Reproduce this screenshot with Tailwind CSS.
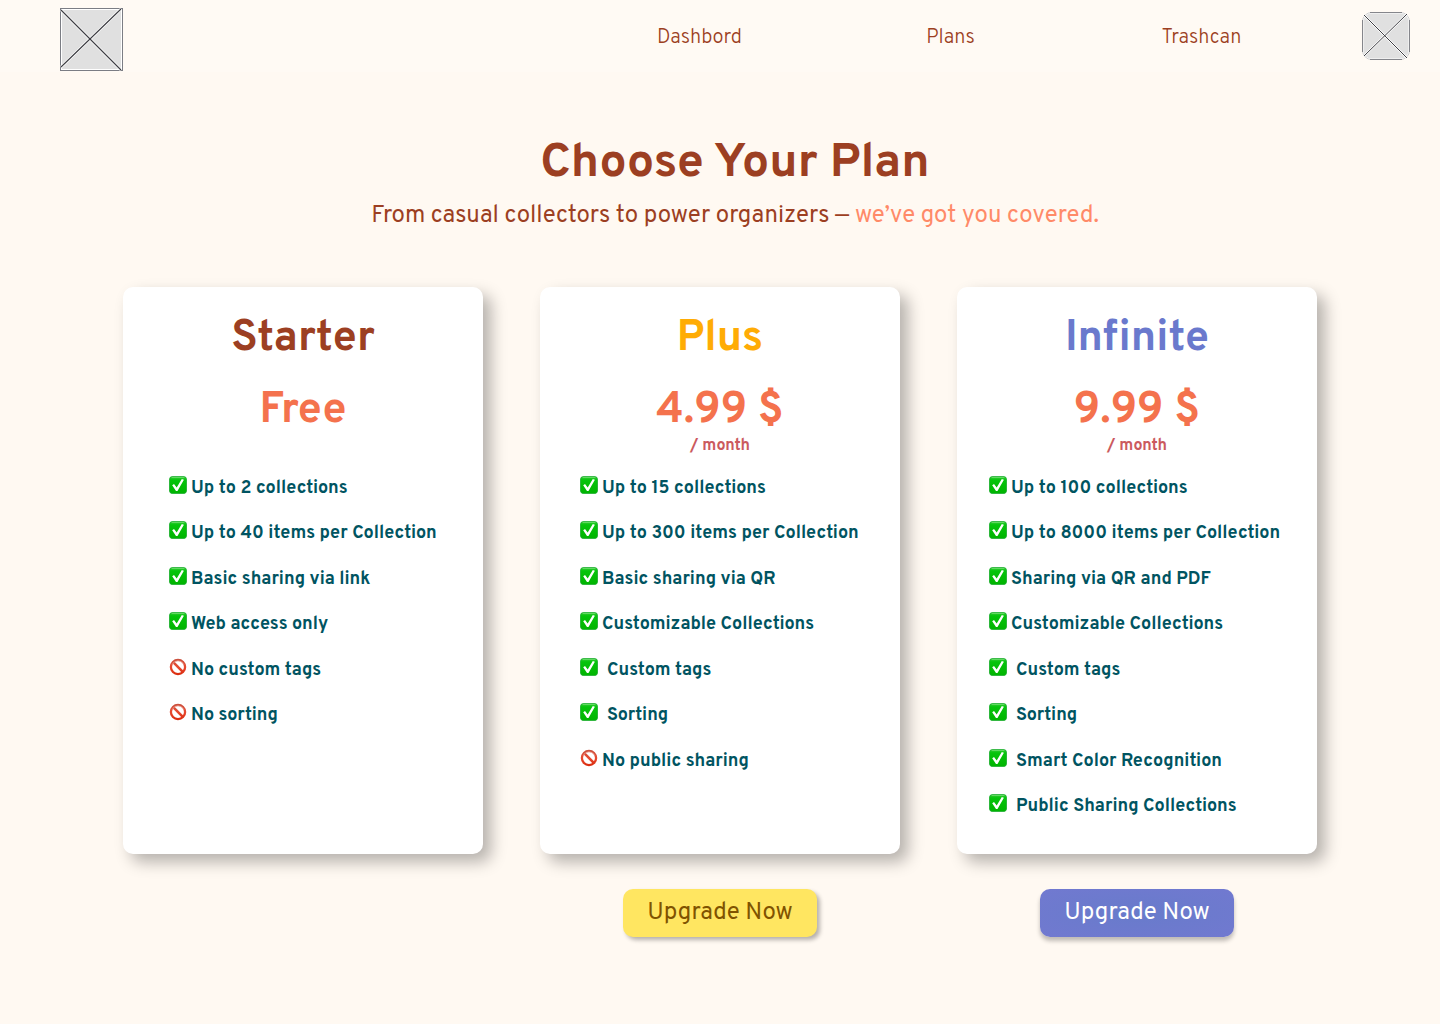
<!DOCTYPE html>
<html lang="en">
<head>
<meta charset="utf-8">
<meta name="viewport" content="width=device-width, initial-scale=1">
<title>Choose Your Plan</title>
<script src="https://cdn.jsdelivr.net/npm/@tailwindcss/browser@4"></script>
</head>
<body class="min-h-screen bg-[#fff9f2] font-[Overpass,Roboto,sans-serif] text-[#9c3f22]">
<svg class="absolute size-0" aria-hidden="true">
  <defs>
    <linearGradient id="green" x1="0" y1="0" x2="0" y2="1"><stop offset="0" stop-color="#3fd03f"/><stop offset=".2" stop-color="#06c40c"/><stop offset="1" stop-color="#00b400"/></linearGradient>
    <linearGradient id="red" gradientUnits="userSpaceOnUse" x1="0" y1="1" x2="0" y2="17"><stop offset="0" stop-color="#c9513f"/><stop offset=".5" stop-color="#e8492f"/><stop offset="1" stop-color="#d92a0c"/></linearGradient>
    <symbol id="check" viewBox="0 0 18 18"><rect x=".4" y=".4" width="17.2" height="17.2" rx="3.4" fill="url(#green)" stroke="#15a92a" stroke-width=".8"/><path d="M3 1.500h12" stroke="#6fdc6f" stroke-width=".8" stroke-linecap="round"/><path d="M3.2 9.200 5 7.900 7.700 11.600 12.800 3 14.900 3.700 8.500 15H7z" fill="#fff"/></symbol>
    <symbol id="no" viewBox="0 0 18 18"><g fill="none" stroke="url(#red)"><circle cx="9" cy="9" r="7.1" stroke-width="2.3"/><path d="m4.2 4.2 9.6 9.6" stroke-width="2.600"/></g><path d="M3.2 6.4a6.5 6.5 0 0 1 11.6 0" fill="none" stroke="#f3b2a6" stroke-width=".7"/></symbol>
  </defs>
</svg>
<header class="flex h-[72px] items-start bg-[#fffaf4] pt-2 pr-[30px] pl-[60px]">
  <a href="#" aria-label="Home" class="shrink-0">
    <svg class="size-[63px]" viewBox="0 0 63 63"><rect x=".5" y=".5" width="62" height="62" fill="#fff" stroke="#7b7d84"/><rect x="2" y="2" width="59" height="59" fill="#e0e0e0"/><path d="M1 2 61 62M1 59 61 1" stroke="#fff" stroke-width="2.5"/><path d="M1 2 61 62M1 59 61 1" stroke="#3d3d42" stroke-width="1.1"/></svg>
  </a>
  <nav class="ml-auto flex text-center text-xl leading-[60px] font-light">
    <a href="#" class="w-[251px]">Dashbord</a>
    <a href="#" class="w-[251px]">Plans</a>
    <a href="#" class="w-[251px]">Trashcan</a>
  </nav>
  <button type="button" aria-label="Account" class="mt-1 ml-[35px] shrink-0">
    <svg class="block size-12" viewBox="0 0 48 48"><rect x=".5" y=".5" width="47" height="47" rx="9" fill="#fff" stroke="#d0d0d2"/><path d="M8 .5h32M8 47.500h32M.5 8v32M47.500 8v32" stroke="#85868b"/><rect x="1.500" y="1.500" width="45" height="45" rx="8" fill="#e0e0e0"/><path d="M2 3 45 46M2 44 45 2" stroke="#fff" stroke-width="2.2"/><path d="M2 3 45 46M2 44 45 2" stroke="#3d3d42"/></svg>
  </button>
</header>
<main>
  <div class="pt-16 pl-[30px] text-center">
    <h1 class="text-5xl leading-[56px] font-bold">Choose Your Plan</h1>
    <p class="mt-[6px] text-2xl leading-9">From casual collectors to power organizers — <span class="text-[#ff8a68]">we’ve got you covered.</span></p>
  </div>
  <div class="mt-[53px] flex justify-center gap-[57px]">
    <section class="w-[360px]">
      <div class="h-[567px] rounded-[10px] bg-white pt-[22px] text-center shadow-[8px_8px_16px_#0000004a]">
        <h2 class="text-[43px] leading-[60px] font-bold">Starter</h2>
        <p class="mt-3 text-[43px] leading-[60px] font-bold text-[#f4724d]">Free</p>
        <ul class="mt-[25px] grid h-[364px] grid-rows-8 pl-[46px] text-left text-lg font-bold text-[#005461]">
          <li class="flex items-center gap-1"><svg class="mb-2 size-[18px] shrink-0"><use href="#check"/></svg>Up to 2 collections</li>
          <li class="flex items-center gap-1"><svg class="mb-2 size-[18px] shrink-0"><use href="#check"/></svg>Up to 40 items per Collection</li>
          <li class="flex items-center gap-1"><svg class="mb-2 size-[18px] shrink-0"><use href="#check"/></svg>Basic sharing via link</li>
          <li class="flex items-center gap-1"><svg class="mb-2 size-[18px] shrink-0"><use href="#check"/></svg>Web access only</li>
          <li class="flex items-center gap-1"><svg class="mb-2 size-[18px] shrink-0"><use href="#no"/></svg>No custom tags</li>
          <li class="flex items-center gap-1"><svg class="mb-2 size-[18px] shrink-0"><use href="#no"/></svg>No sorting</li>
        </ul>
      </div>
    </section>
    <section class="w-[360px] text-center">
      <div class="h-[567px] rounded-[10px] bg-white pt-[22px] shadow-[8px_8px_16px_#0000004a]">
        <h2 class="text-[43px] leading-[60px] font-bold text-[#ffac05]">Plus</h2>
        <p class="mt-3 text-[43px] leading-[60px] font-bold text-[#f4724d]">4.99 $</p>
        <p class="-mt-[5px] text-base leading-5 font-bold text-[#cb5a5e]">/ month</p>
        <ul class="mt-[10px] grid h-[364px] grid-rows-8 pl-10 text-left text-lg font-bold text-[#005461]">
          <li class="flex items-center gap-1"><svg class="mb-2 size-[18px] shrink-0"><use href="#check"/></svg>Up to 15 collections</li>
          <li class="flex items-center gap-1"><svg class="mb-2 size-[18px] shrink-0"><use href="#check"/></svg>Up to 300 items per Collection</li>
          <li class="flex items-center gap-1"><svg class="mb-2 size-[18px] shrink-0"><use href="#check"/></svg>Basic sharing via QR</li>
          <li class="flex items-center gap-1"><svg class="mb-2 size-[18px] shrink-0"><use href="#check"/></svg>Customizable Collections</li>
          <li class="flex items-center gap-[9px]"><svg class="mb-2 size-[18px] shrink-0"><use href="#check"/></svg>Custom tags</li>
          <li class="flex items-center gap-[9px]"><svg class="mb-2 size-[18px] shrink-0"><use href="#check"/></svg>Sorting</li>
          <li class="flex items-center gap-1"><svg class="mb-2 size-[18px] shrink-0"><use href="#no"/></svg>No public sharing</li>
        </ul>
      </div>
      <button type="button" class="mt-[35px] h-12 w-[194px] rounded-[10px] bg-[#ffe661] text-2xl text-[#805300] shadow-[3px_3px_4px_#0000004a]">Upgrade Now</button>
    </section>
    <section class="w-[360px] text-center">
      <div class="h-[567px] rounded-[10px] bg-white pt-[22px] shadow-[8px_8px_16px_#0000004a]">
        <h2 class="text-[43px] leading-[60px] font-bold text-[#6a79cd]">Infinite</h2>
        <p class="mt-3 text-[43px] leading-[60px] font-bold text-[#f4724d]">9.99 $</p>
        <p class="-mt-[5px] text-base leading-5 font-bold text-[#cb5a5e]">/ month</p>
        <ul class="mt-[10px] grid h-[364px] grid-rows-8 pl-8 text-left text-lg font-bold text-[#005461]">
          <li class="flex items-center gap-1"><svg class="mb-2 size-[18px] shrink-0"><use href="#check"/></svg>Up to 100 collections</li>
          <li class="flex items-center gap-1"><svg class="mb-2 size-[18px] shrink-0"><use href="#check"/></svg>Up to 8000 items per Collection</li>
          <li class="flex items-center gap-1"><svg class="mb-2 size-[18px] shrink-0"><use href="#check"/></svg>Sharing via QR and PDF</li>
          <li class="flex items-center gap-1"><svg class="mb-2 size-[18px] shrink-0"><use href="#check"/></svg>Customizable Collections</li>
          <li class="flex items-center gap-[9px]"><svg class="mb-2 size-[18px] shrink-0"><use href="#check"/></svg>Custom tags</li>
          <li class="flex items-center gap-[9px]"><svg class="mb-2 size-[18px] shrink-0"><use href="#check"/></svg>Sorting</li>
          <li class="flex items-center gap-[9px]"><svg class="mb-2 size-[18px] shrink-0"><use href="#check"/></svg>Smart Color Recognition</li>
          <li class="flex items-center gap-[9px]"><svg class="mb-2 size-[18px] shrink-0"><use href="#check"/></svg>Public Sharing Collections</li>
        </ul>
      </div>
      <button type="button" class="mt-[35px] h-12 w-[194px] rounded-[10px] bg-[radial-gradient(#687bcb,#7179d0)] text-2xl text-white shadow-[0_4px_4px_#00000040]">Upgrade Now</button>
    </section>
  </div>
</main>
</body>
</html>
